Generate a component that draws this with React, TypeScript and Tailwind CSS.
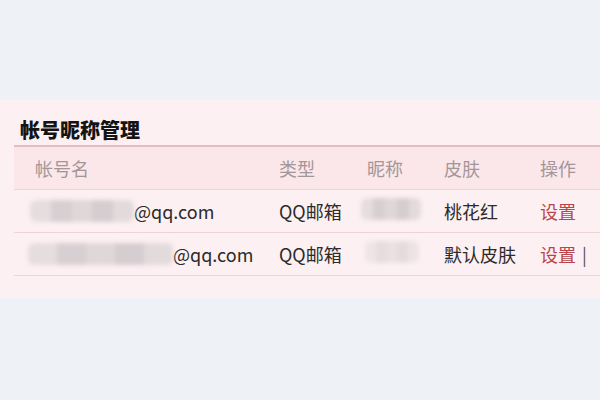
import React from "react";

const font = { fontFamily: '"Noto Sans CJK SC", "Noto Sans", sans-serif' };

function Blur({ w, className = "" }: { w: number; className?: string }) {
  return (
    <span className={"inline-flex h-[24px] items-center " + className} style={{ width: w }}>
      <span className="flex h-[22px] w-full overflow-hidden rounded-[6px] blur-[2px]">
        <span className="flex-1 bg-[#e6dddf]" />
        <span className="flex-1 bg-[#d8cfd2]" />
        <span className="flex-1 bg-[#e0d7d9]" />
        <span className="flex-1 bg-[#d6cdd0]" />
        <span className="flex-1 bg-[#e3dadc]" />
      </span>
    </span>
  );
}

export default function App() {
  const cols = "grid grid-cols-[265px_88px_77px_96px_1fr] items-center";
  return (
    <div className="flex h-[400px] w-[600px] flex-col bg-[#eef1f5]" style={font}>
      <div className="h-[100px] shrink-0" />
      <div className="flex h-[198px] shrink-0 flex-col bg-[#fdf0f2] pl-[14px] pt-[17px]">
        <div className="pl-[6px] text-[20px] font-black leading-[26px] text-[#141414]">帐号昵称管理</div>
        <div className="mt-[2px] h-[2px] bg-[#e6bcc4]" />
        <div className={cols + " h-[42px] bg-[#fbe6ea] text-[18px] text-[#a39699]"}>
          <span className="pl-[21px]">帐号名</span>
          <span>类型</span>
          <span>昵称</span>
          <span>皮肤</span>
          <span>操作</span>
        </div>
        <div className="h-px bg-[#edd2d7]" />
        <div className={cols + " h-[42px] text-[18px] text-[#2b2b2b]"}>
          <span className="flex items-center pl-[16px]">
            <Blur w={104} />
            <span>@qq.com</span>
          </span>
          <span>QQ邮箱</span>
          <span className="-ml-[6px]"><Blur w={60} /></span>
          <span>桃花红</span>
          <span className="text-[#b8454b]">设置</span>
        </div>
        <div className="h-px bg-[#edd2d7]" />
        <div className={cols + " h-[42px] text-[18px] text-[#2b2b2b]"}>
          <span className="flex items-center pl-[14px]">
            <Blur w={145} />
            <span>@qq.com</span>
          </span>
          <span>QQ邮箱</span>
          <span className="-ml-[2px] opacity-60"><Blur w={54} /></span>
          <span>默认皮肤</span>
          <span className="text-[#b8454b]">
            设置 <span className="ml-[2px] text-[#555]">|</span>
          </span>
        </div>
        <div className="h-px bg-[#edd2d7]" />
      </div>
    </div>
  );
}
